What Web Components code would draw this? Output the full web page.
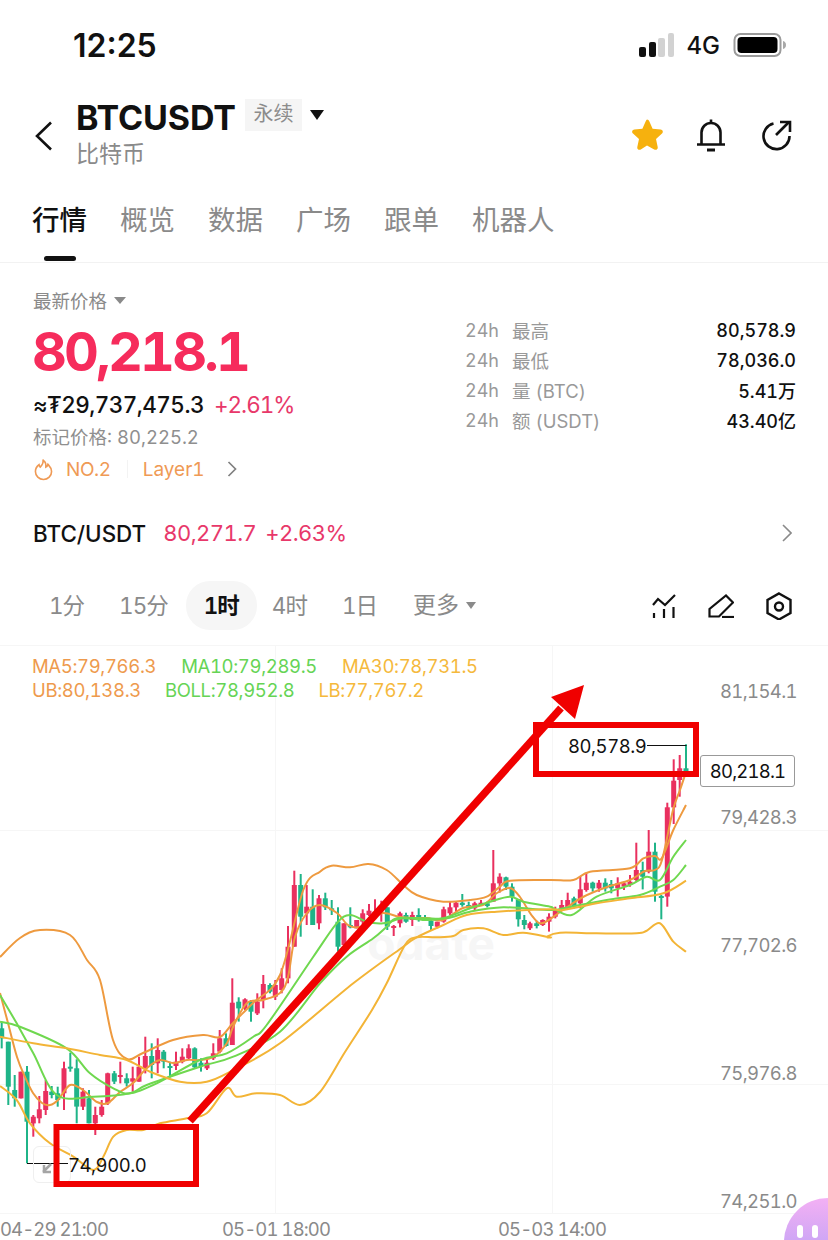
<!DOCTYPE html>
<html lang="zh">
<head>
<meta charset="utf-8">
<title>BTCUSDT</title>
<style>
  html, body { margin: 0; padding: 0; background: #fff; }
  body { width: 828px; height: 1240px; overflow: hidden; font-family: Inter, "Noto Sans CJK SC", sans-serif; font-variant-numeric: tabular-nums; color: #111; }
</style>
</head>
<body>
<status-bar></status-bar>
<coin-header></coin-header>
<tab-bar>
  <tab-item active>行情</tab-item>
  <tab-item>概览</tab-item>
  <tab-item>数据</tab-item>
  <tab-item>广场</tab-item>
  <tab-item>跟单</tab-item>
  <tab-item>机器人</tab-item>
</tab-bar>
<price-panel>
  <stat-row label="最高">80,578.9</stat-row>
  <stat-row label="最低">78,036.0</stat-row>
  <stat-row label="量 (BTC)">5.41万</stat-row>
  <stat-row label="额 (USDT)">43.40亿</stat-row>
</price-panel>
<spot-row></spot-row>
<interval-bar>
  <interval-item>1分</interval-item>
  <interval-item>15分</interval-item>
  <interval-item active>1时</interval-item>
  <interval-item>4时</interval-item>
  <interval-item>1日</interval-item>
</interval-bar>
<kline-chart></kline-chart>

<script>
class StatusBar extends HTMLElement {
  constructor() {
    super();
    this.attachShadow({mode: 'open'});
    this.shadowRoot.innerHTML = `
<style>
  :host { display: flex; height: 90px; align-items: center; justify-content: space-between; padding: 0 41px 0 73px; }
  .time { font-size: 32px; font-weight: 600; font-variant-numeric: normal; }
  .right { display: flex; align-items: center; gap: 12px; }
  .net { font-size: 24px; font-weight: 500; margin-right: 1px; }
  svg { display: block; }
</style>
<div class="time">12:25</div>
<div class="right">
  <svg width="37" height="26" viewBox="0 0 37 26">
    <rect x="1" y="15" width="7" height="10" rx="2" fill="#111"/>
    <rect x="11" y="10" width="7" height="15" rx="2" fill="#111"/>
    <rect x="20" y="6" width="7" height="19" rx="2" fill="#d2d2d2"/>
    <rect x="30" y="1" width="6" height="24" rx="2" fill="#d2d2d2"/>
  </svg>
  <div class="net">4G</div>
  <svg width="54" height="26" viewBox="0 0 54 26">
    <rect x="1.500" y="2" width="46" height="22" rx="6" fill="none" stroke="#9b9b9b" stroke-width="2"/>
    <rect x="4.500" y="5" width="40" height="16" rx="4" fill="#000"/>
    <path d="M50 9c2 .5 3 2 3 4s-1 3.500-3 4z" fill="#a8a8a8"/>
  </svg>
</div>`;
  }
}

class CoinHeader extends HTMLElement {
  constructor() {
    super();
    this.attachShadow({mode: 'open'});
    this.shadowRoot.innerHTML = `
<style>
  :host { display: flex; height: 90px; box-sizing: border-box; padding: 7px 35px 0 35px; align-items: flex-start; }
  .back { margin: 24px 24px 0 0; }
  .info { flex: 1; }
  .top { display: flex; align-items: center; height: 40px; }
  .name { font-size: 34px; font-weight: 700; letter-spacing: -.1px; margin-left: -1px; }
  .badge { margin-left: 9px; width: 57px; height: 32px; margin-top: -4px; background: #f5f5f5; color: #8c8c8c; font-size: 20px; text-align: center; line-height: 30px; }
  .tri { margin: -5px 0 0 8px; width: 0; height: 0; border-left: 7.500px solid transparent; border-right: 7.500px solid transparent; border-top: 10px solid #111; }
  .sub { font-size: 23px; line-height: 30px; color: #8a8a8a; margin-top: 2px; margin-left: -1px; }
  .actions { display: flex; align-items: center; margin-top: 21px; }
  svg { display: block; }
</style>
<svg class="back" width="18" height="30" viewBox="0 0 18 30"><path d="M16 1.500 2 15l14 13.500" fill="none" stroke="#111" stroke-width="2.600"/></svg>
<div class="info">
  <div class="top"><div class="name">BTCUSDT</div><div class="badge">永续</div><div class="tri"></div></div>
  <div class="sub">比特币</div>
</div>
<div class="actions">
  <svg width="34" height="34" viewBox="0 0 34 34" style="margin-right:32px"><path d="M17 1.500c1.200 0 1.900.8 2.400 1.900l3.200 7.300 8 .8c2.200.2 3 2.600 1.400 4.100l-6 5.400 1.700 7.900c.5 2.100-1.600 3.700-3.500 2.600L17 27.400 10.800 31.500c-1.900 1.100-4-.5-3.500-2.600l1.700-7.900-6-5.400C1.400 14.100 2.200 11.700 4.400 11.500l8-.8 3.200-7.300c.5-1.100 1.200-1.900 1.400-1.900z" fill="#f6b10e"/></svg>
  <svg width="30" height="34" viewBox="0 0 30 34" style="margin-right:36px" fill="none" stroke="#111" stroke-width="2.600"><path d="M1 26.500h28M5.500 26.500V14.500a9.500 9.500 0 0 1 19 0v12"/><path d="M15 5V1.500"/><path d="M11 32h8" stroke-width="3"/></svg>
  <svg width="32" height="32" viewBox="0 0 32 32" fill="none" stroke="#111" stroke-width="2.600" style="margin-left:-1px"><path d="M12.500 4.500A13 13 0 1 0 28.500 17"/><path d="M15 16 28 3"/><path d="M19 3h10v10"/></svg>
</div>`;
  }
}

class TabBar extends HTMLElement {
  constructor() {
    super();
    this.attachShadow({mode: 'open'});
    this.shadowRoot.innerHTML = `
<style>
  :host { display: flex; gap: 33px; padding: 26px 32px 1px; border-bottom: 1px solid #f2f2f2; }
</style>
<slot></slot>`;
  }
}

class TabItem extends HTMLElement {
  constructor() {
    super();
    this.attachShadow({mode: 'open'});
    this.shadowRoot.innerHTML = `
<style>
  :host { display: flex; flex-direction: column; align-items: center; color: #8a8a8a; }
  :host([active]) { color: #111; font-weight: 500; }
  .txt { font-size: 27.500px; line-height: 28px; }
  .line { width: 32px; height: 5px; margin-top: 22px; border-radius: 3px; }
  :host([active]) .line { background: #111; }
</style>
<div class="txt"><slot></slot></div>
<div class="line"></div>`;
  }
}

class PricePanel extends HTMLElement {
  constructor() {
    super();
    this.attachShadow({mode: 'open'});
    this.shadowRoot.innerHTML = `
<style>
  :host { display: flex; height: 247px; box-sizing: border-box; padding: 0 32px 0 33px; justify-content: space-between; }
  .left { display: flex; flex-direction: column; }
  .label { display: flex; align-items: center; gap: 7px; margin-top: 25px; height: 24px; font-size: 18.500px; color: #8a8a8a; }
  .tri { width: 0; height: 0; border-left: 6px solid transparent; border-right: 6px solid transparent; border-top: 7px solid #8a8a8a; }
  .price { margin: 10px 0 0 -1px; font-size: 54px; line-height: 60px; font-weight: 700; color: #f62c5c; letter-spacing: -2.800px; }
  .fiat { margin-top: 9px; line-height: 28px; font-size: 22.500px; font-weight: 500; white-space: nowrap; letter-spacing: -.55px; }
  .fiat span { color: #e8386a; font-weight: 400; margin-left: 10px; letter-spacing: -1px; }
  .mark { margin-top: 6px; line-height: 24px; font-size: 18.500px; color: #8f8f8f; }
  .tags { display: flex; align-items: center; margin-top: 8px; height: 24px; font-size: 19px; color: #ef9a55; }
  .tags svg { display: block; }
  .no { letter-spacing: -.4px; }
  .sep { width: 1px; height: 18px; background: #f3f3f3; margin: 0 15px 0 16px; }
  .stats { width: 331px; padding-top: 52px; display: flex; flex-direction: column; }
</style>
<div class="left">
  <div class="label">最新价格<div class="tri"></div></div>
  <div class="price">80,218.1</div>
  <div class="fiat">≈₮29,737,475.3<span>+2.61%</span></div>
  <div class="mark">标记价格: 80,225.2</div>
  <div class="tags">
    <svg width="19" height="23" viewBox="0 0 20 24" style="margin:0 13px 0 1px" fill="none" stroke="#ef9a55" stroke-width="1.700"><path d="M9.500 2c.6 3.500-1 5.500-3 7.500-.6-.8-1-1.500-1.200-2.500C2.700 9 1.500 11.500 1.500 14a8.500 8.500 0 0 0 17 0c0-3.500-2-5.500-3.800-7.500-.4 1.500-1 2.500-2.200 3 .3-3.500-1-6.500-3.500-7.500z"/></svg>
    <span class="no">NO.2</span><div class="sep"></div><span>Layer1</span>
    <svg width="10" height="16" viewBox="0 0 10 16" style="margin-left:22px" fill="none" stroke="#808080" stroke-width="1.700"><path d="m1.500 1 7 7-7 7"/></svg>
  </div>
</div>
<div class="stats"><slot></slot></div>`;
  }
}

class StatRow extends HTMLElement {
  constructor() {
    super();
    this.attachShadow({mode: 'open'});
    this.shadowRoot.innerHTML = `
<style>
  :host { display: flex; height: 30px; align-items: center; font-size: 18px; }
  .h { width: 47px; color: #999; }
  .name { flex: 1; color: #999; font-size: 18.500px; }
  .val { color: #111; font-weight: 500; }
</style>
<div class="h">24h</div>
<div class="name"></div>
<div class="val"><slot></slot></div>`;
    this.shadowRoot.querySelector('.name').textContent = this.getAttribute('label');
  }
}

class SpotRow extends HTMLElement {
  constructor() {
    super();
    this.attachShadow({mode: 'open'});
    this.shadowRoot.innerHTML = `
<style>
  :host { display: flex; height: 46px; box-sizing: border-box; padding: 0 36px 0 33px; align-items: center; font-size: 22px; }
  .pair { font-size: 22.400px; font-weight: 500; margin-right: 17px; }
  .num { color: #e8386a; margin-right: 9px; letter-spacing: -.55px; }
  svg { margin-left: auto; display: block; }
</style>
<span class="pair">BTC/USDT</span>
<span class="num">80,271.7</span>
<span class="num">+2.63%</span>
<svg width="10" height="18" viewBox="0 0 10 18" fill="none" stroke="#8a8a8a" stroke-width="1.600"><path d="m1 1 8 8-8 8"/></svg>`;
  }
}

class IntervalBar extends HTMLElement {
  constructor() {
    super();
    this.attachShadow({mode: 'open'});
    this.shadowRoot.innerHTML = `
<style>
  :host { display: flex; height: 74px; box-sizing: border-box; padding: 25px 36px 0 32px; gap: 1px; margin-bottom: 15px; }
  .more { display: flex; align-items: center; gap: 7px; padding-left: 18px; height: 49px; line-height: 47px; color: #8a8a8a; font-size: 23px; }
  .tri { width: 0; height: 0; border-left: 5.500px solid transparent; border-right: 5.500px solid transparent; border-top: 7px solid #8a8a8a; }
  .tools { margin-left: auto; display: flex; gap: 32px; height: 49px; align-items: center; }
  svg { display: block; }
</style>
<slot></slot>
<div class="more">更多<div class="tri"></div></div>
<div class="tools">
  <svg width="24" height="24" viewBox="656 592 24 24" fill="none" stroke="#111" stroke-width="2.200"><path d="m657 603 5-6 7 6 10-10"/><path d="M658 611v5M668 607v9M677.500 605v11"/></svg>
  <svg width="26" height="24" viewBox="711 592 26 24" fill="none" stroke="#111" stroke-width="2.200"><path d="M712.500 614.500v-7.500l16.500-13.500 7 7-14 14z"/><path d="M725 615h12"/></svg>
  <svg width="26" height="28" viewBox="767 590 26 28" fill="none" stroke="#111" stroke-width="2.400"><path d="m780 591.500 11.500 6.500v13l-11.500 6.500-11.500-6.500v-13z"/><circle cx="780" cy="604.500" r="4"/></svg>
</div>`;
  }
}

class IntervalItem extends HTMLElement {
  constructor() {
    super();
    this.attachShadow({mode: 'open'});
    this.shadowRoot.innerHTML = `
<style>
  :host { display: block; height: 49px; line-height: 49px; padding: 0 17px; border-radius: 24px; font-size: 22.500px; letter-spacing: -1px; color: #8a8a8a; white-space: nowrap; }
  :host([active]) { background: #f6f6f6; color: #111; font-weight: 600; padding: 0 18px; margin-right: -3px; }
</style>
<slot></slot>`;
  }
}

// numbers read off the reference, in zoomed crop coordinates (3x), [x,color,bodyTop,bodyBot,wickTop,wickBot]
const R = 'r', G = 'g';
const candlesA = [
  [5,G,205,235,185,265],[25,G,245,380,245,435],[44,G,390,415,345,440],[63,R,335,415,335,415],[81,G,335,485,318,610],
  [100,R,470,490,465,530],[118,R,448,475,408,490],[137,R,393,450,360,465],[155,G,395,405,378,415],[173,G,400,420,380,440],
  [192,R,325,400,305,450],[211,G,320,325,278,335],[230,G,325,440,298,490],[249,R,395,440,385,450],[267,G,415,490,390,490],
  [286,R,465,490,440,525],[305,R,440,465,420,470],[323,R,340,430,338,435],[343,G,340,365,333,372],[361,R,345,350,305,370],
  [380,G,355,370,340,380],[398,R,355,365,320,395],[417,R,320,365,290,365],[436,R,288,325,230,340],[455,G,288,315,250,355],
  [473,R,270,310,235,340],[491,G,275,305,270,325],[510,G,318,322,305,352],[528,R,305,318,275,330],[547,R,290,305,265,310],
  [566,R,265,295,253,300],[584,G,265,322,262,325],[603,G,308,318,295,335],[621,R,308,325,295,330],[640,R,280,295,250,300],
  [659,R,235,275,210,280],[678,G,235,258,220,260],[697,R,128,255,55,255],[716,G,125,145,112,185],[735,R,118,145,115,150],
  [753,G,125,155,120,185],[772,R,125,160,100,165],[790,R,72,120,45,145]
];
const candlesB = [
  [0,G,405,425,400,430],[16,R,405,440,390,450],[35,R,385,420,355,430],[54,R,290,385,228,400],[73,R,105,290,62,290],
  [92,G,105,200,72,260],[110,R,170,190,105,225],[128,G,170,225,118,225],[147,R,145,220,135,238],[166,G,145,172,128,180],
  [185,G,175,180,150,195],[204,G,215,290,172,305],[222,R,220,285,220,290],[241,G,225,232,172,235],[260,R,210,235,210,235],
  [278,R,190,215,178,225],[297,R,182,195,162,198],[315,R,185,195,148,200],[334,R,185,190,152,215],[352,G,172,230,172,240],
  [371,R,228,232,225,258],[390,R,190,220,185,232],[408,G,195,215,188,218],[427,R,195,210,185,228],[446,G,195,210,175,215],
  [465,G,203,208,195,212],[483,G,212,228,210,240],[502,R,215,230,215,235],[521,R,178,215,170,218],[540,R,172,190,155,195],
  [558,R,158,172,155,185],[577,G,158,165,132,170],[596,G,165,175,155,178],[614,R,160,175,155,182],[633,R,158,163,150,168],
  [652,G,160,168,155,172],[670,R,100,155,0,155],[689,R,80,100,70,128],[708,G,82,110,80,120],[726,G,110,140,100,155],
  [745,G,148,208,148,230],[763,G,210,225,195,238]
];
const candlesC = [
  [0,R,700,715,695,720],[20,G,700,708,692,715],[38,R,690,705,688,708],[57,R,680,695,670,725],[76,R,660,680,650,685],
  [95,R,645,655,630,660],[113,R,630,655,608,660],[132,G,625,650,620,655],[151,R,598,640,558,655],[169,R,578,600,548,605],
  [188,G,578,595,575,605],[207,R,578,595,570,605],[226,G,578,595,565,605],[244,G,582,595,570,610],[263,R,580,595,562,620],
  [282,R,580,590,575,600],[300,R,575,585,555,590],[319,R,540,570,458,575],[338,G,540,560,515,598],[356,R,485,545,420,550],
  [375,G,485,605,458,635],[394,G,618,622,615,688],[412,R,352,620,338,650],[431,R,272,352,208,402],[449,R,235,270,195,320],
  [468,G,235,248,163,250]
];

// crop origins: A (0,960) B (270,850) C (530,690)
const A = p => [p[0] / 3, 960 + p[1] / 3];
const B = p => [270 + p[0] / 3, 850 + p[1] / 3];
const C = p => [530 + p[0] / 3, 690 + p[1] / 3];

const lines = [
  { color: '#ee9a3f', pts: [
    [0,957],[20,938],[40,930],[70,935],[87,960],[100,980],[113,1040],[127,1059],[143,1053],[173,1040],[203,1035],[220,1037],[233,1023],[253,1003],[280,975],
    ...[[100,120],[150,65],[185,47],[240,52],[295,42],[350,60],[400,105],[440,135],[520,155],[600,150],[650,140],[690,110],[720,92],[840,90]].map(B),
    ...[[130,570],[180,545],[300,535],[340,505],[375,498],[395,505],[430,420],[468,345]].map(C)] },
  { color: '#ee9a3f', pts: [
    [0,993],[8,1023],[17,1057],[25,1077],[33,1093],[42,1103],[50,1105],[58,1100],[70,1085],[83,1090],[97,1102],[108,1103],[120,1092],[133,1083],[147,1068],[160,1060],[173,1063],[187,1060],[200,1060],[213,1057],[227,1043],[233,1027],[247,1003],[263,1000],
    [280,993],[288,977],[295,937],[307,913],[320,905],[337,913],[348,925],[360,927],[370,920],[383,913],[400,917],[413,918],[427,918],[443,920],[463,908],[483,905],[497,893],[510,888],[520,897],[533,917],[543,923],[563,910],[583,897],[607,887],[630,880],[645,871],[655,870],[662,860],[673,810],[680,790],[686,772]] },
  { color: '#6fd84f', pts: [
    ...[[0,185],[60,200],[200,265],[270,340],[340,385],[390,400],[470,370],[600,300],[680,280],[760,230],[800,195]].map(A),
    ...[[130,320],[200,220],[240,195],[290,215],[340,220],[400,205],[470,210],[520,205],[600,175],[660,155],[720,140],[760,155],[840,170]].map(B),
    ...[[70,655],[125,675],[200,620],[300,585],[350,560],[390,570],[430,500],[468,450]].map(C)] },
  { color: '#6fd84f', pts: [
    ...[[0,105],[50,190],[100,280],[170,405],[280,410],[390,400],[440,375],[600,320],[700,290],[840,215]].map(A),
    ...[[150,400],[230,320],[310,265],[350,230],[380,205],[460,205],[530,205],[600,185],[700,172],[840,180]].map(B),
    ...[[100,655],[230,630],[330,615],[390,590],[430,570],[468,525]].map(C)] },
  { color: '#f3b436', pts: [
    ...[[0,230],[100,250],[200,265],[300,285],[380,300],[450,335],[540,365],[620,365],[700,330],[840,250]].map(A),
    ...[[250,400],[400,290],[440,262],[520,225],[590,195],[680,185],[840,178]].map(B),
    ...[[100,660],[200,640],[300,625],[400,610],[468,572]].map(C)] },
  { color: '#f3b436', pts: [
    ...[[0,378],[50,420],[90,490],[150,550],[220,590],[280,630],[310,590],[340,530],[380,510],[430,510],[480,490],[560,475],[620,460],[680,385],[710,410],[770,400],[840,405]].map(A),
    [300,1105],[320,1092],[345,1052],[372,1010],
    ...[[350,400],[405,285],[440,262],[500,262],[550,258],[580,240],[640,235],[700,255],[760,248],[840,262]].map(B),
    ...[[50,740],[90,728],[200,730],[320,730],[350,722],[390,700],[430,755],[468,785]].map(C)] }
];

function smooth(pts) {
  let d = `M${pts[0][0].toFixed(1)} ${pts[0][1].toFixed(1)}`;
  for (let i = 0; i < pts.length - 1; i++) {
    const p0 = pts[i - 1] || pts[i], p1 = pts[i], p2 = pts[i + 1], p3 = pts[i + 2] || p2;
    const c1x = p1[0] + (p2[0] - p0[0]) / 6, c1y = p1[1] + (p2[1] - p0[1]) / 6;
    const c2x = p2[0] - (p3[0] - p1[0]) / 6, c2y = p2[1] - (p3[1] - p1[1]) / 6;
    d += `C${c1x.toFixed(1)} ${c1y.toFixed(1)} ${c2x.toFixed(1)} ${c2y.toFixed(1)} ${p2[0].toFixed(1)} ${p2[1].toFixed(1)}`;
  }
  return d;
}

function candleSvg(list, conv) {
  return list.map(c => {
    const [x, top] = conv([c[0], c[2]]);
    const bot = conv([c[0], c[3]])[1], wt = conv([c[0], c[4]])[1], wb = conv([c[0], c[5]])[1];
    const col = c[1] === R ? '#e9305f' : '#1fb488';
    return `<rect x="${(x - 1).toFixed(1)}" y="${wt.toFixed(1)}" width="2" height="${(wb - wt).toFixed(1)}" fill="${col}"/>` +
      `<rect x="${(x - 2.5).toFixed(1)}" y="${top.toFixed(1)}" width="5" height="${Math.max(bot - top, 2).toFixed(1)}" fill="${col}"/>`;
  }).join('');
}

class KlineChart extends HTMLElement {
  constructor() {
    super();
    this.attachShadow({mode: 'open'});
    this.shadowRoot.innerHTML = `
<style>
  :host { display: block; position: relative; height: 595px; overflow: hidden; font-size: 18.500px; }
  svg { position: absolute; left: 0; top: 0; display: block; }
  .legend { position: absolute; left: 32px; top: 9px; font-size: 18.500px; line-height: 24px; white-space: nowrap; letter-spacing: -.35px; }
  .legend div { display: flex; }
  .o { color: #ee9a4d; } .g { color: #66d455; } .y { color: #f5b93c; }
  .m1 { margin-left: 25px; } .m2 { margin-left: 24px; }
  .axis { position: absolute; right: 31px; color: #8a8a8a; line-height: 24px; letter-spacing: -.6px; }
  .date { position: absolute; top: 572px; color: #8a8a8a; line-height: 24px; white-space: nowrap; letter-spacing: -.9px; }
  .mark { position: absolute; color: #111; line-height: 24px; white-space: nowrap; letter-spacing: -.45px; }
  .now { position: absolute; left: 700px; top: 110px; width: 95px; height: 32px; box-sizing: border-box; border: 1px solid #999; border-radius: 3px; background: #fff; color: #111; text-align: center; line-height: 30px; letter-spacing: -.8px; }
  .wm { position: absolute; right: 333px; top: 268px; font-size: 46px; line-height: 60px; font-weight: 700; color: #f6f6f6; }
  .jump { position: absolute; left: 33px; top: 501px; width: 38px; height: 37px; box-sizing: border-box; border: 1px solid #efefef; border-radius: 6px; }
  .bot { position: absolute; left: 784px; top: 553px; width: 88px; height: 88px; border-radius: 50%; background: linear-gradient(180deg, #f3b0f4, #a99cf6); }
  .eye { position: absolute; top: 27px; width: 6px; height: 13px; border-radius: 3px; background: #fff; }
</style>
<div class="wm">odate</div>
<svg id="plot" width="828" height="595" viewBox="0 645 828 595"></svg>
<div class="legend">
  <div><span class="o">MA5:79,766.3</span><span class="g m1">MA10:79,289.5</span><span class="y m1">MA30:78,731.5</span></div>
  <div><span class="o">UB:80,138.3</span><span class="g m2">BOLL:78,952.8</span><span class="y m2">LB:77,767.2</span></div>
</div>
<div class="axis" style="top:34px">81,154.1</div>
<div class="axis" style="top:160px">79,428.3</div>
<div class="axis" style="top:288px">77,702.6</div>
<div class="axis" style="top:416px">75,976.8</div>
<div class="axis" style="top:544px">74,251.0</div>
<div class="date" style="left:0">04-29 21:00</div>
<div class="date" style="left:222px">05-01 18:00</div>
<div class="date" style="left:498px">05-03 14:00</div>
<div class="jump"></div>
<div class="mark" style="left:68px;top:508px">74,900.0</div>
<div class="mark" style="left:568px;top:89px">80,578.9</div>
<div class="now">80,218.1</div>
<svg id="over" width="828" height="595" viewBox="0 645 828 595"></svg>
<div class="bot"><div class="eye" style="left:13px"></div><div class="eye" style="left:28px"></div></div>`;

    const grid = '<path d="M0 645.500H828M0 830.500H828M0 1084.500H828M0 1213.500H828M275.500 645V1213M552.500 645V1213" stroke="#f6f6f6" stroke-width="1" fill="none"/>';
    const guides = '<path d="M27 1163.500H68M647 745.500H686.500" stroke="#111" stroke-width="1.200" fill="none"/>' +
      '<path d="m43 1172 8-8M44 1165v7h7" stroke="#a5a5a5" stroke-width="2.500" fill="none"/>';
    const paths = lines.map(l => `<path d="${smooth(l.pts)}" fill="none" stroke="${l.color}" stroke-width="2" stroke-linejoin="round"/>`).join('');
    this.shadowRoot.getElementById('plot').innerHTML = grid +
      candleSvg(candlesA, A) + candleSvg(candlesB, B) + candleSvg(candlesC, C) + paths + guides;

    // hand drawn annotation over the chart
    this.shadowRoot.getElementById('over').innerHTML =
      '<rect x="56.500" y="1127" width="139.500" height="57" fill="none" stroke="#f00000" stroke-width="6"/>' +
      '<rect x="536" y="725" width="160" height="49" fill="none" stroke="#f00000" stroke-width="6"/>' +
      '<path d="M190 1121 561 708" stroke="#f00000" stroke-width="7.500" fill="none"/>' +
      '<path d="M584 685 551 697 575 719z" fill="#f00000"/>';
  }
}

customElements.define('status-bar', StatusBar);
customElements.define('coin-header', CoinHeader);
customElements.define('tab-bar', TabBar);
customElements.define('tab-item', TabItem);
customElements.define('price-panel', PricePanel);
customElements.define('stat-row', StatRow);
customElements.define('spot-row', SpotRow);
customElements.define('interval-bar', IntervalBar);
customElements.define('interval-item', IntervalItem);
customElements.define('kline-chart', KlineChart);
</script>
</body>
</html>
